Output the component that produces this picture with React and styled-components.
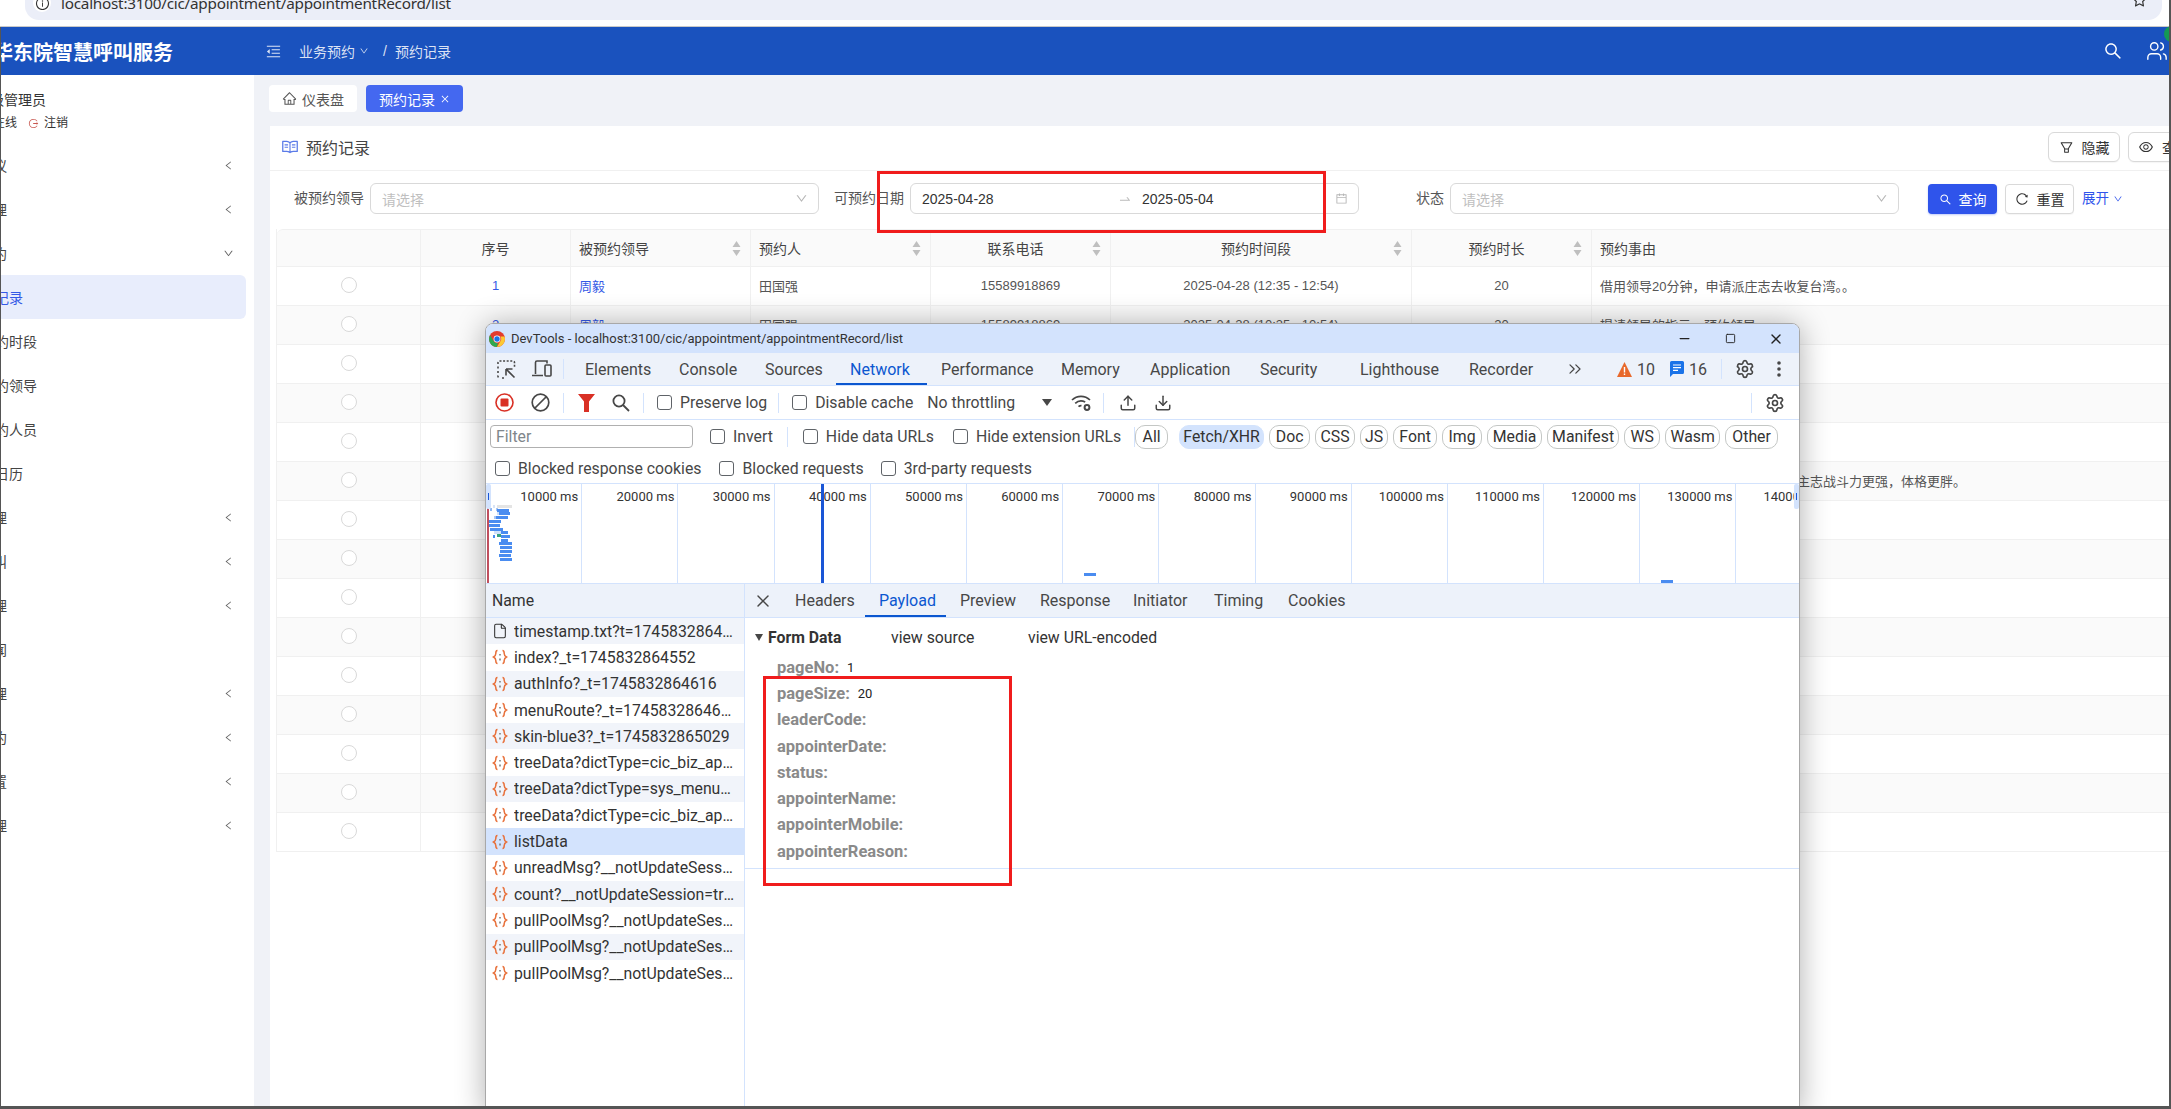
import React from 'react';
import styled, { createGlobalStyle } from 'styled-components';
import {
  AiOutlineMenuFold,
  AiOutlineHome,
  AiOutlineFilter,
  AiOutlineEye,
  AiOutlineSearch,
  AiOutlineReload,
  AiOutlineDown,
  AiOutlineLeft,
  AiOutlineCalendar,
  AiOutlineClose,
  AiOutlineSwapRight,
  AiOutlineStar,
  AiOutlineRead,
  AiOutlineInfoCircle,
  AiOutlineLogout,
} from 'react-icons/ai';
import { Users, ChevronsRight, File, Settings, Minus, Square, X, Upload, Download } from 'lucide-react';

const GlobalStyle = createGlobalStyle`
  html, body { margin: 0; padding: 0; background: #fff; }
  * { box-sizing: border-box; }
`;

const Page = styled.div`
  position: relative;
  width: 2171px;
  height: 1109px;
  overflow: hidden;
  background: #fff;
  font-family: 'Liberation Sans', 'Noto Sans CJK SC', sans-serif;
  font-size: 14px;
  color: #444;
`;

/* browser chrome, only its lower edge is in the shot */
const BrowserBar = styled.div`
  height: 27px;
  padding-left: 25px;
  padding-right: 9px;
  background: #fff;
  border-bottom: 1px solid #c9c9c9;
`;

const UrlPill = styled.div`
  height: 20px;
  padding: 0 14px 0 8px;
  display: flex;
  align-items: flex-start;
  gap: 10px;
  overflow: hidden;
  background: #ebeef8;
  border-radius: 0 0 14px 14px;
  color: #333;
`;

const UrlInfo = styled.span`
  display: flex;
  width: 18px;
  height: 18px;
  margin-top: -6px;
  align-items: center;
  justify-content: center;
  background: #fff;
  border-radius: 50%;
  font-size: 15px;
`;

const UrlText = styled.span`
  margin-top: -6px;
  font-size: 15.3px;
  line-height: 18px;
  font-family: 'Noto Sans', sans-serif;
  letter-spacing: -0.25px;
`;

const UrlStar = styled.span`
  margin-left: auto;
  margin-top: -8px;
  font-size: 17px;
  display: flex;
`;

const AppHeader = styled.header`
  height: 48px;
  display: flex;
  align-items: center;
  background: #1a52be;
  color: #fff;
`;

const Brand = styled.div`
  width: 272px;
  margin-left: -7px;
  font-size: 20px;
  font-weight: 700;
  white-space: nowrap;
`;

const Crumbs = styled.div`
  display: flex;
  align-items: center;
  color: rgba(255, 255, 255, 0.85);
  font-size: 14px;
  gap: 4px;
`;

const CrumbIcon = styled.span`
  display: flex;
  font-size: 17px;
  margin-right: 13px;
`;

const CrumbSep = styled.span`
  margin: 0 4px 0 10px;
`;

const HeaderTools = styled.div`
  position: relative;
  margin-left: auto;
  padding-right: 3px;
  display: flex;
  align-items: center;
  gap: 23px;
  font-size: 20px;
`;

const HeaderBadge = styled.span`
  position: absolute;
  top: -14px;
  right: -9px;
  width: 16px;
  height: 16px;
  border-radius: 50%;
  background: #149a55;
`;

const Body = styled.div`
  display: flex;
  height: 1034px;
`;

const Sidebar = styled.aside`
  flex: none;
  width: 254px;
  background: #fff;
  overflow: hidden;
`;

const UserPanel = styled.div`
  height: 68px;
  padding: 16px 0 0;
  color: #333;
`;

const UserName = styled.div`
  margin-left: -10px;
  height: 18px;
  line-height: 18px;
  font-size: 14px;
`;

const UserStatus = styled.div`
  display: flex;
  align-items: center;
  margin: 6px 0 0 -7px;
  font-size: 12px;
  line-height: 16px;
`;

const LogoutMark = styled.span`
  display: flex;
  margin: 0 5px 0 11px;
  font-size: 11px;
  color: #c8574f;
`;

const MenuItem = styled.div`
  height: 44px;
  width: 246px;
  padding-right: 12px;
  display: flex;
  align-items: center;
  border-radius: 0 6px 6px 0;
  color: ${(p) => (p.$active ? '#3459e6' : '#444')};
  background: ${(p) => (p.$active ? '#e8edfc' : 'transparent')};
`;

const MenuLabel = styled.span`
  margin-left: ${(p) => (p.$sub ? '-5px' : '-7px')};
  white-space: nowrap;
`;

const MenuArrow = styled.span`
  margin-left: auto;
  display: flex;
  font-size: 11px;
  color: #666;
`;

const Main = styled.main`
  flex: none;
  width: 1970px;
  background: #f0f2f7;
`;

const TabStrip = styled.div`
  height: 51px;
  padding: 10px 0 0 15px;
  display: flex;
  gap: 9px;
`;

const PageTab = styled.div`
  width: ${(p) => p.$w}px;
  height: 27px;
  display: flex;
  align-items: center;
  justify-content: center;
  gap: 5px;
  border-radius: 4px;
  font-size: 14px;
  background: ${(p) => (p.$active ? '#4468f0' : '#fff')};
  color: ${(p) => (p.$active ? '#fff' : '#555')};
`;

const Card = styled.section`
  margin-left: 16px;
  height: 983px;
  background: #fff;
`;

const CardHead = styled.div`
  height: 45px;
  padding: 0 24px 2px 11px;
  display: flex;
  align-items: center;
  border-bottom: 1px solid #f0f0f0;
`;

const CardTitle = styled.h2`
  margin: 0 0 0 7px;
  font-size: 16px;
  font-weight: 400;
  color: #444;
`;

const CardIcon = styled.span`
  display: flex;
  font-size: 18px;
  color: #5b7be8;
`;

const GhostButton = styled.button`
  flex: none;
  width: ${(p) => p.$w}px;
  height: 30px;
  margin-left: ${(p) => p.$ml || 0};
  display: flex;
  align-items: center;
  justify-content: center;
  gap: 8px;
  background: #fff;
  border: 1px solid #d9d9d9;
  border-radius: 6px;
  box-shadow: 0 1px 1px rgba(0, 0, 0, 0.04);
  font: inherit;
  color: #333;
`;

const SearchRow = styled.div`
  height: 58px;
  padding-top: 12px;
  display: flex;
  align-items: flex-start;
`;

const FieldLabel = styled.label`
  flex: none;
  width: ${(p) => p.$w}px;
  line-height: 31px;
  margin-right: 6px;
  text-align: right;
  color: #555;
`;

const Picker = styled.div`
  flex: none;
  width: 449px;
  height: 31px;
  padding: 0 10px 0 11px;
  display: flex;
  align-items: center;
  border: 1px solid #d9d9d9;
  border-radius: 6px;
  background: #fff;
`;

const Placeholder = styled.span`
  color: #bfbfbf;
`;

const PickerIcon = styled.span`
  display: flex;
  margin-left: auto;
  font-size: 13px;
  color: #b5b5b5;
`;

const DateValue = styled.span`
  width: ${(p) => p.$w}px;
  color: #333;
`;

const DateArrow = styled.span`
  display: flex;
  width: 130px;
  padding-left: 106px;
  font-size: 14px;
  color: #bbb;
`;

const PrimaryButton = styled.button`
  flex: none;
  width: 69px;
  height: 30px;
  margin: 1px 0 0 29px;
  display: flex;
  align-items: center;
  justify-content: center;
  gap: 7px;
  background: #2f54eb;
  border: 0;
  border-radius: 4px;
  color: #fff;
  font: inherit;
  box-shadow: 0 1px 2px rgba(47, 84, 235, 0.3);
`;

const ResetButton = styled(GhostButton)`
  margin: 1px 0 0 8px;
  border-radius: 4px;
`;

const ExpandLink = styled.span`
  margin: 0 0 0 8px;
  display: flex;
  align-items: center;
  gap: 4px;
  line-height: 31px;
  color: #2f54eb;
  font-size: 13.5px;
`;

const Table = styled.div`
  margin: 0 6px;
  border-left: 1px solid #f0f0f0;
`;

const COLUMNS = '144px 150px 180px 180px 180px 301px 180px 1fr';

const HeadRow = styled.div`
  display: grid;
  grid-template-columns: ${COLUMNS};
  height: 38px;
  background: #fafafa;
  border-top: 1px solid #f0f0f0;
  border-bottom: 1px solid #f0f0f0;
  border-radius: 6px 0 0 0;
`;

const BodyRow = styled.div`
  display: grid;
  grid-template-columns: ${COLUMNS};
  height: 39px;
  background: ${(p) => (p.$striped ? '#fafafa' : '#fff')};
  border-bottom: 1px solid #f0f0f0;
`;

const HeadCell = styled.div`
  position: relative;
  display: flex;
  align-items: center;
  justify-content: ${(p) => (p.$center ? 'center' : 'flex-start')};
  padding: 0 ${(p) => (p.$sort && p.$center ? '18px' : '8px')} 0 8px;
  border-right: 1px solid #f0f0f0;
  color: #444;
  font-weight: 400;
`;

const SortCaret = styled.svg`
  position: absolute;
  right: 9px;
  top: 10px;
`;

const Cell = styled.div`
  display: flex;
  align-items: center;
  justify-content: ${(p) => (p.$center ? 'center' : 'flex-start')};
  padding: 0 8px 2px ${(p) => p.$indent || 8}px;
  border-right: 1px solid #f0f0f0;
  font-size: 13px;
  color: #555;
  white-space: nowrap;
`;

const LinkCell = styled(Cell)`
  color: #3459e6;
`;

const Radio = styled.span`
  width: 16px;
  height: 16px;
  border: 1px solid #d9d9d9;
  border-radius: 50%;
  background: #fff;
`;

/* devtools floating over the page */
const DevWindow = styled.div`
  position: absolute;
  left: 485px;
  top: 323px;
  width: 1315px;
  height: 790px;
  background: #fff;
  border: 1px solid #a8a8a8;
  border-radius: 8px 8px 0 0;
  box-shadow: 0 2px 30px rgba(0, 0, 0, 0.32);
  font-family: Roboto, 'Liberation Sans', sans-serif;
  font-size: 15.8px;
  color: #474747;
  overflow: hidden;
`;

const TitleBar = styled.div`
  height: 29px;
  padding-left: 3px;
  display: flex;
  align-items: center;
  gap: 6px;
  background: #d3e3fd;
  color: #333;
  font-size: 13px;
`;

const WinButtons = styled.div`
  margin-left: auto;
  display: flex;
  color: #222;
`;

const WinButton = styled.span`
  width: 46px;
  height: 29px;
  display: flex;
  align-items: center;
  justify-content: center;
`;

const DevBar = styled.div`
  height: ${(p) => p.$h || 34}px;
  display: flex;
  align-items: center;
  background: ${(p) => (p.$tint ? '#edf2fa' : '#fff')};
  border-bottom: ${(p) => (p.$line === false ? '0' : '1px solid #d3e3fd')};
`;

const ToolSlot = styled.span`
  flex: none;
  width: ${(p) => p.$w}px;
  margin-left: ${(p) => p.$ml || 0}px;
  display: flex;
  align-items: center;
  justify-content: center;
  color: #474747;
`;

const BarSep = styled.span`
  flex: none;
  width: 1px;
  height: 20px;
  margin-left: ${(p) => p.$ml || 0}px;
  margin-right: ${(p) => p.$mr || 0}px;
  background: #d3e3fd;
`;

const DevTab = styled.div`
  flex: none;
  width: ${(p) => p.$w}px;
  height: 100%;
  padding-left: 14px;
  display: flex;
  align-items: center;
  font-size: 16px;
  color: ${(p) => (p.$active ? '#0b57d0' : '#474747')};
  border-bottom: 2px solid ${(p) => (p.$active ? '#0b57d0' : 'transparent')};
  border-top: 2px solid transparent;
`;

const Counter = styled.span`
  display: flex;
  align-items: center;
  gap: 5px;
  margin-left: ${(p) => p.$ml || 0}px;
  font-size: 16px;
`;

const CheckItem = styled.label`
  flex: none;
  display: flex;
  align-items: center;
  gap: 8px;
  margin-left: ${(p) => p.$ml || 0}px;
  white-space: nowrap;
`;

const CheckBox = styled.span`
  width: 15px;
  height: 15px;
  border: 1.5px solid #5f6368;
  border-radius: 3px;
  background: #fff;
`;

const FilterInput = styled.div`
  width: 203px;
  height: 23px;
  margin-left: 4px;
  padding-left: 5px;
  line-height: 21px;
  border: 1px solid #b0b0b0;
  border-radius: 4px;
  color: #80868b;
`;

const TypePill = styled.span`
  flex: none;
  width: ${(p) => p.$w}px;
  height: 24px;
  margin-left: ${(p) => p.$ml ?? 5}px;
  display: flex;
  align-items: center;
  justify-content: center;
  border-radius: 10px;
  border: 1px solid ${(p) => (p.$on ? '#d3e3fd' : '#c4c7c5')};
  background: ${(p) => (p.$on ? '#d3e3fd' : '#fff')};
  color: #333;
`;

const Timeline = styled.div`
  position: relative;
  height: 101px;
  display: grid;
  grid-auto-flow: column;
  grid-auto-columns: 96.2px;
  overflow: hidden;
  border-top: 1px solid #d3e3fd;
  border-bottom: 1px solid #d3e3fd;
`;

const TimeCell = styled.div`
  padding: 5px 3px 0 0;
  text-align: right;
  white-space: nowrap;
  font-size: 13px;
  line-height: 16px;
  color: #333;
  border-right: 1px solid #d3e3fd;
`;

const Playhead = styled.span`
  position: absolute;
  left: 335px;
  top: 0;
  bottom: 0;
  width: 3px;
  background: #1a56d6;
`;

const Handle = styled.span`
  position: absolute;
  top: 0;
  width: 5px;
  height: 25px;
  background: #d3e3fd;
  border-radius: 2px;
  ${(p) => (p.$right ? 'right: 0;' : 'left: 0;')}
  &::after {
    content: '';
    position: absolute;
    top: 9px;
    left: 2px;
    width: 1px;
    height: 7px;
    background: #1a56d6;
  }
`;

const Waterfall = styled.svg`
  position: absolute;
  left: 0;
  top: 15px;
`;

const Split = styled.div`
  display: flex;
  height: 540px;
`;

const NamePane = styled.div`
  flex: none;
  width: 259px;
  border-right: 1px solid #d3e3fd;
`;

const NameHead = styled.div`
  height: 34px;
  padding-left: 6px;
  display: flex;
  align-items: center;
  background: #edf2fa;
  border-bottom: 1px solid #d3e3fd;
  color: #333;
`;

const RequestRow = styled.div`
  height: 26.3px;
  padding-left: 6px;
  display: flex;
  align-items: center;
  gap: 6px;
  white-space: nowrap;
  color: #333;
  background: ${(p) => (p.$selected ? '#d3e3fd' : p.$striped ? '#f1f4fa' : '#fff')};
  & > svg {
    flex: none;
  }
`;

const RequestName = styled.span`
  width: 221px;
  overflow: hidden;
  text-overflow: ellipsis;
`;

const DetailPane = styled.div`
  flex: 1;
`;

const FormSection = styled.div`
  height: 251px;
  padding: 6px 0 0 10px;
  border-bottom: 1px solid #d3e3fd;
`;

const FormHead = styled.div`
  height: 26px;
  display: flex;
  align-items: center;
`;

const Triangle = styled.span`
  width: 0;
  height: 0;
  margin-right: 5px;
  border-left: 4px solid transparent;
  border-right: 4px solid transparent;
  border-top: 7px solid #474747;
`;

const FormTitle = styled.strong`
  width: 123px;
  color: #333;
  font-weight: 700;
`;

const FormLink = styled.span`
  width: ${(p) => p.$w}px;
  color: #333;
`;

const FormRows = styled.div`
  margin: 4px 0 0 22px;
`;

const FormRow = styled.div`
  height: 26.3px;
  display: flex;
  align-items: center;
  gap: 8px;
`;

const FormKey = styled.span`
  font-size: 16.5px;
  font-weight: 700;
  color: #8a8a8a;
`;

const FormValue = styled.span`
  font-size: 13px;
  color: #222;
`;

const RedBox = styled.div`
  position: absolute;
  border: 3px solid #f01c1c;
  pointer-events: none;
`;

const DateHighlight = styled(RedBox)`
  left: 877px;
  top: 171px;
  width: 449px;
  height: 62px;
`;

const PayloadHighlight = styled(RedBox)`
  left: 763px;
  top: 676px;
  width: 249px;
  height: 210px;
`;

const ScreenEdge = styled.span`
  position: absolute;
  background: #555;
  ${(p) => p.$side === 'left' && 'left: 0; top: 27px; bottom: 0; width: 1px;'}
  ${(p) => p.$side === 'right' && 'right: 0; top: 0; bottom: 0; width: 2px;'}
  ${(p) => p.$side === 'bottom' && 'left: 0; right: 0; bottom: 0; height: 3px;'}
`;

const ChromeLogo = () => (
  <svg width="16" height="16" viewBox="0 0 16 16">
    <circle cx="8" cy="8" r="8" fill="#e33b2e" />
    <path d="M8 16a8 8 0 0 1-6.9-12L4.6 10a4 4 0 0 0 4.2 1.9z" fill="#2da94f" />
    <path d="M16 8a8 8 0 0 1-8 8l3.5-6a4 4 0 0 0-.1-4.6h4a8 8 0 0 1 .6 2.6z" fill="#fcc934" />
    <circle cx="8" cy="8" r="3.4" fill="#fff" />
    <circle cx="8" cy="8" r="2.7" fill="#1a73e8" />
  </svg>
);

const InspectIcon = () => (
  <svg width="19" height="19" viewBox="0 0 19 19" fill="none" stroke="#474747" strokeWidth="1.6">
    <path d="M1 4V2.5A1.5 1.5 0 0 1 2.5 1H16a1.5 1.5 0 0 1 1.5 1.5V7M1 6.5v2M1 11v2M1 15.5A2 2 0 0 0 3 18M5 18h2" strokeDasharray="2 1.6" />
    <path d="M9 9h6.5M9 9v6.5M9 9l8.5 8.5" />
  </svg>
);

const DeviceIcon = () => (
  <svg width="20" height="18" viewBox="0 0 20 18" fill="none" stroke="#474747" strokeWidth="1.6">
    <path d="M3.5 14V2.5A1.5 1.5 0 0 1 5 1h10v2.5" />
    <path d="M0 15.5h11" />
    <rect x="13" y="5" width="6" height="11" rx="1" />
  </svg>
);

const RecordIcon = () => (
  <svg width="19" height="19" viewBox="0 0 19 19">
    <circle cx="9.5" cy="9.5" r="8.5" fill="none" stroke="#d93025" strokeWidth="1.6" />
    <rect x="5.5" y="5.5" width="8" height="8" rx="1" fill="#d93025" />
  </svg>
);

const ClearIcon = () => (
  <svg width="19" height="19" viewBox="0 0 19 19" fill="none" stroke="#474747" strokeWidth="1.7">
    <circle cx="9.5" cy="9.5" r="8.3" />
    <path d="M15.5 3.5l-12 12" />
  </svg>
);

const FunnelIcon = () => (
  <svg width="17" height="18" viewBox="0 0 17 18">
    <path d="M0 0h17l-6 7.5V18H6V7.5z" fill="#d93025" />
  </svg>
);

const LensIcon = () => (
  <svg width="18" height="18" viewBox="0 0 18 18" fill="none" stroke="#474747" strokeWidth="1.8">
    <circle cx="7" cy="7" r="5.6" />
    <path d="M11 11l6 6" />
  </svg>
);

const WifiGearIcon = () => (
  <svg width="21" height="18" viewBox="0 0 21 18" fill="none" stroke="#474747" strokeWidth="1.7">
    <path d="M1 6a13 13 0 0 1 18 0M4.2 9.4a8.5 8.5 0 0 1 10-1.4M7.5 12.6a4 4 0 0 1 3-1" />
    <circle cx="16" cy="13.5" r="2.4" strokeWidth="2" />
  </svg>
);

const WarnIcon = () => (
  <svg width="15" height="15" viewBox="0 0 15 15">
    <path d="M7.5 0L15 15H0z" fill="#e8692c" />
    <path d="M6.8 5h1.4v5.5H6.8zM6.8 11.5h1.4V13H6.8z" fill="#fff" />
  </svg>
);

const MessageIcon = () => (
  <svg width="14" height="16" viewBox="0 0 14 16">
    <path d="M1.5 0h11A1.5 1.5 0 0 1 14 1.5v10a1.5 1.5 0 0 1-1.5 1.5H3l-3 3V1.5A1.5 1.5 0 0 1 1.5 0z" fill="#1a73e8" />
    <path d="M3 4h8M3 6.7h8M3 9.4h5" stroke="#fff" strokeWidth="1.2" />
  </svg>
);

const DotsIcon = () => (
  <svg width="4" height="16" viewBox="0 0 4 16" fill="#474747">
    <circle cx="2" cy="2" r="1.8" />
    <circle cx="2" cy="8" r="1.8" />
    <circle cx="2" cy="14" r="1.8" />
  </svg>
);

const FetchIcon = () => (
  <svg width="16" height="16" viewBox="0 0 16 16" fill="none" stroke="#e8703a" strokeWidth="1.5">
    <path d="M5.5 1.5C3.8 1.5 3.8 3 3.8 4.5S3.6 7 1.5 8c2.1 1 2.3 2 2.3 3.5s0 3 1.7 3" />
    <path d="M10.5 1.5c1.7 0 1.7 1.5 1.7 3s.2 2.5 2.3 3.5c-2.1 1-2.3 2-2.3 3.5s0 3-1.7 3" />
    <path d="M8 5v1.4M8 9.5v2" stroke="#777" />
  </svg>
);

const SortIcon = () => (
  <SortCaret width="9" height="17" viewBox="0 0 9 17" fill="#bfbfbf">
    <path d="M4.5 1L8.5 7H.5zM4.5 16L.5 10h8z" />
  </SortCaret>
);

const WATERFALL = [
  [7, 6, 2, '#d8e4f7'],
  [11, 6, 15, '#e4e4e4'],
  [4, 9, 2, '#8fb6f2'],
  [10, 9, 2, '#a7c6f5'],
  [11, 10, 12, '#4a8cf0'],
  [11, 13, 2, '#cfe0fa'],
  [13, 13, 11, '#4a8cf0'],
  [10, 17, 12, '#4a8cf0'],
  [8, 17, 2, '#a7c6f5'],
  [3, 21, 12, '#4a8cf0'],
  [3, 25, 11, '#4a8cf0'],
  [4, 29, 13, '#4a8cf0'],
  [8, 32, 9, '#cfe0fa'],
  [15, 32, 7, '#4a8cf0'],
  [11, 35, 4, '#39a37f'],
  [15, 36, 9, '#4a8cf0'],
  [7, 36, 2, '#4a8cf0'],
  [15, 40, 7, '#4a8cf0'],
  [13, 43, 13, '#4a8cf0'],
  [14, 47, 12, '#4a8cf0'],
  [14, 51, 12, '#4a8cf0'],
  [13, 55, 12, '#4a8cf0'],
  [14, 59, 12, '#4a8cf0'],
  [598, 74, 12, '#4a8cf0'],
  [1175, 81, 12, '#4a8cf0'],
];

const DEV_TABS = [
  ['Elements', 94],
  ['Console', 86],
  ['Sources', 85],
  ['Network', 91, true],
  ['Performance', 120],
  ['Memory', 89],
  ['Application', 110],
  ['Security', 100],
  ['Lighthouse', 109],
  ['Recorder', 98],
];

const DETAIL_TABS = [
  ['Headers', 84],
  ['Payload', 81, true],
  ['Preview', 80],
  ['Response', 93],
  ['Initiator', 81],
  ['Timing', 74],
  ['Cookies', 70],
];

const TYPE_PILLS = [
  ['All', 33, 0],
  ['Fetch/XHR', 85, 11, true],
  ['Doc', 41],
  ['CSS', 40],
  ['JS', 28],
  ['Font', 44],
  ['Img', 40],
  ['Media', 55],
  ['Manifest', 72],
  ['WS', 36],
  ['Wasm', 55],
  ['Other', 53],
];

const REQUESTS = [
  'timestamp.txt?t=1745832864576',
  'index?_t=1745832864552',
  'authInfo?_t=1745832864616',
  'menuRoute?_t=1745832864688',
  'skin-blue3?_t=1745832865029',
  'treeData?dictType=cic_biz_appointer',
  'treeData?dictType=sys_menu_type_list',
  'treeData?dictType=cic_biz_appoint',
  'listData',
  'unreadMsg?__notUpdateSession=true',
  'count?__notUpdateSession=true&t=1',
  'pullPoolMsg?__notUpdateSession=true',
  'pullPoolMsg?__notUpdateSession=true',
  'pullPoolMsg?__notUpdateSession=true',
];

const FORM_DATA = [
  ['pageNo', '1'],
  ['pageSize', '20'],
  ['leaderCode', ''],
  ['appointerDate', ''],
  ['status', ''],
  ['appointerName', ''],
  ['appointerMobile', ''],
  ['appointerReason', ''],
];

const MENU = [
  { label: '议', arrow: 'left' },
  { label: '理', arrow: 'left' },
  { label: '约', arrow: 'down' },
  { label: '记录', sub: true, active: true },
  { label: '约时段', sub: true },
  { label: '约领导', sub: true },
  { label: '约人员', sub: true },
  { label: '日历', sub: true },
  { label: '理', arrow: 'left' },
  { label: '叫', arrow: 'left' },
  { label: '理', arrow: 'left' },
  { label: '闻' },
  { label: '理', arrow: 'left' },
  { label: '约', arrow: 'left' },
  { label: '置', arrow: 'left' },
  { label: '理', arrow: 'left' },
];

const HEADERS = [
  { label: '', center: true },
  { label: '序号', center: true },
  { label: '被预约领导', sort: true },
  { label: '预约人', sort: true },
  { label: '联系电话', center: true, sort: true },
  { label: '预约时间段', center: true, sort: true },
  { label: '预约时长', center: true, sort: true },
  { label: '预约事由' },
];

const ROWS = [
  { no: 1, leader: '周毅', name: '田国强', phone: '15589918869', time: '2025-04-28 (12:35 - 12:54)', mins: 20, reason: '借用领导20分钟，申请派庄志去收复台湾。。' },
  { no: 2, leader: '周毅', name: '田国强', phone: '15589918869', time: '2025-04-28 (10:35 - 10:54)', mins: 20, reason: '提请领导的指示，预约领导' },
  {},
  {},
  {},
  { reason: '主志战斗力更强，体格更胖。', indent: 205 },
  {},
  {},
  {},
  {},
  {},
  {},
  {},
  {},
  {},
];

const App = () => (
  <Page>
    <GlobalStyle />
    <BrowserBar>
      <UrlPill>
        <UrlInfo><AiOutlineInfoCircle /></UrlInfo>
        <UrlText>localhost:3100/cic/appointment/appointmentRecord/list</UrlText>
        <UrlStar><AiOutlineStar /></UrlStar>
      </UrlPill>
    </BrowserBar>

    <AppHeader>
      <Brand>华东院智慧呼叫服务</Brand>
      <Crumbs>
        <CrumbIcon><AiOutlineMenuFold /></CrumbIcon>
        <span>业务预约</span>
        <AiOutlineDown size={10} />
        <CrumbSep>/</CrumbSep>
        <span>预约记录</span>
      </Crumbs>
      <HeaderTools>
        <AiOutlineSearch />
        <Users size={22} strokeWidth={1.5} />
        <HeaderBadge />
      </HeaderTools>
    </AppHeader>

    <Body>
      <Sidebar>
        <UserPanel>
          <UserName>级管理员</UserName>
          <UserStatus>
            在线
            <LogoutMark><AiOutlineLogout /></LogoutMark>
            注销
          </UserStatus>
        </UserPanel>
        {MENU.map((item, i) => (
          <MenuItem key={i} $active={item.active}>
            <MenuLabel $sub={item.sub}>{item.label}</MenuLabel>
            {item.arrow && (
              <MenuArrow>{item.arrow === 'left' ? <AiOutlineLeft /> : <AiOutlineDown />}</MenuArrow>
            )}
          </MenuItem>
        ))}
      </Sidebar>

      <Main>
        <TabStrip>
          <PageTab $w={88}><AiOutlineHome size={15} />仪表盘</PageTab>
          <PageTab $w={97} $active>预约记录<AiOutlineClose size={10} /></PageTab>
        </TabStrip>

        <Card>
          <CardHead>
            <CardIcon><AiOutlineRead /></CardIcon>
            <CardTitle>预约记录</CardTitle>
            <GhostButton $w={72} $ml="auto"><AiOutlineFilter size={15} />隐藏</GhostButton>
            <GhostButton $w={72} $ml="8px"><AiOutlineEye size={16} />查看</GhostButton>
          </CardHead>

          <SearchRow>
            <FieldLabel $w={94}>被预约领导</FieldLabel>
            <Picker>
              <Placeholder>请选择</Placeholder>
              <PickerIcon><AiOutlineDown /></PickerIcon>
            </Picker>
            <FieldLabel $w={85}>可预约日期</FieldLabel>
            <Picker>
              <DateValue $w={90}>2025-04-28</DateValue>
              <DateArrow><AiOutlineSwapRight /></DateArrow>
              <DateValue $w={90}>2025-05-04</DateValue>
              <PickerIcon><AiOutlineCalendar /></PickerIcon>
            </Picker>
            <FieldLabel $w={85}>状态</FieldLabel>
            <Picker>
              <Placeholder>请选择</Placeholder>
              <PickerIcon><AiOutlineDown /></PickerIcon>
            </Picker>
            <PrimaryButton><AiOutlineSearch size={13} />查询</PrimaryButton>
            <ResetButton $w={69}><AiOutlineReload size={14} />重置</ResetButton>
            <ExpandLink>展开<AiOutlineDown size={10} /></ExpandLink>
          </SearchRow>

          <Table>
            <HeadRow>
              {HEADERS.map((h, i) => (
                <HeadCell key={i} $center={h.center} $sort={h.sort}>
                  {h.label}
                  {h.sort && <SortIcon />}
                </HeadCell>
              ))}
            </HeadRow>
            {ROWS.map((row, i) => (
              <BodyRow key={i} $striped={i % 2 === 1}>
                <Cell $center><Radio /></Cell>
                <LinkCell $center>{row.no}</LinkCell>
                <LinkCell>{row.leader}</LinkCell>
                <Cell>{row.name}</Cell>
                <Cell $center>{row.phone}</Cell>
                <Cell $center>{row.time}</Cell>
                <Cell $center>{row.mins}</Cell>
                <Cell $indent={row.indent}>{row.reason}</Cell>
              </BodyRow>
            ))}
          </Table>
        </Card>
      </Main>
    </Body>

    <DevWindow>
      <TitleBar>
        <ChromeLogo />
        DevTools - localhost:3100/cic/appointment/appointmentRecord/list
        <WinButtons>
          <WinButton><Minus size={15} /></WinButton>
          <WinButton><Square size={11} /></WinButton>
          <WinButton><X size={16} /></WinButton>
        </WinButtons>
      </TitleBar>

      <DevBar $tint $h={33}>
        <ToolSlot $w={40}><InspectIcon /></ToolSlot>
        <ToolSlot $w={31}><DeviceIcon /></ToolSlot>
        <BarSep $ml={6} $mr={7} />
        {DEV_TABS.map(([label, w, active]) => (
          <DevTab key={label} $w={w} $active={active}>{label}</DevTab>
        ))}
        <ToolSlot $w={29} $ml={7}><ChevronsRight size={20} strokeWidth={1.5} /></ToolSlot>
        <Counter $ml={28}><WarnIcon />10</Counter>
        <Counter $ml={15}><MessageIcon />16</Counter>
        <BarSep $ml={14} />
        <ToolSlot $w={28} $ml={9}><Settings size={20} /></ToolSlot>
        <ToolSlot $w={16} $ml={12}><DotsIcon /></ToolSlot>
      </DevBar>

      <DevBar>
        <ToolSlot $w={37}><RecordIcon /></ToolSlot>
        <ToolSlot $w={34}><ClearIcon /></ToolSlot>
        <BarSep $ml={6} />
        <ToolSlot $w={34} $ml={5}><FunnelIcon /></ToolSlot>
        <ToolSlot $w={34} $ml={1}><LensIcon /></ToolSlot>
        <BarSep $ml={5} />
        <CheckItem $ml={13}><CheckBox />Preserve log</CheckItem>
        <BarSep $ml={11} />
        <CheckItem $ml={13}><CheckBox />Disable cache</CheckItem>
        <CheckItem $ml={14}>No throttling</CheckItem>
        <ToolSlot $w={12} $ml={26}>
          <svg width="10" height="7" viewBox="0 0 10 7"><path d="M0 0h10L5 7z" fill="#474747" /></svg>
        </ToolSlot>
        <ToolSlot $w={22} $ml={17}><WifiGearIcon /></ToolSlot>
        <BarSep $ml={11} />
        <ToolSlot $w={18} $ml={15}><Upload size={18} /></ToolSlot>
        <ToolSlot $w={18} $ml={17}><Download size={18} /></ToolSlot>
        <BarSep $ml={579} />
        <ToolSlot $w={20} $ml={13}><Settings size={20} /></ToolSlot>
      </DevBar>

      <DevBar $h={33} $line={false}>
        <FilterInput>Filter</FilterInput>
        <CheckItem $ml={17}><CheckBox />Invert</CheckItem>
        <BarSep $ml={14} />
        <CheckItem $ml={15}><CheckBox />Hide data URLs</CheckItem>
        <CheckItem $ml={19}><CheckBox />Hide extension URLs</CheckItem>
        <BarSep $ml={13} />
        {TYPE_PILLS.map(([label, w, ml, on], i) => (
          <TypePill key={label} $w={w} $ml={i === 0 ? 0 : ml} $on={on}>{label}</TypePill>
        ))}
      </DevBar>

      <DevBar $h={30} $line={false}>
        <CheckItem $ml={9}><CheckBox />Blocked response cookies</CheckItem>
        <CheckItem $ml={18}><CheckBox />Blocked requests</CheckItem>
        <CheckItem $ml={17}><CheckBox />3rd-party requests</CheckItem>
      </DevBar>

      <Timeline>
        {Array.from({ length: 14 }, (_, i) => (
          <TimeCell key={i}>{(i + 1) * 10000} ms</TimeCell>
        ))}
        <Waterfall width="1313" height="85" viewBox="0 0 1313 85">
          <rect x="1" y="9" width="2" height="76" fill="#c0505f" />
          {WATERFALL.map(([x, y, w, fill], i) => (
            <rect key={i} x={x} y={y} width={w} height="3" fill={fill} />
          ))}
        </Waterfall>
        <Playhead />
        <Handle />
        <Handle $right />
      </Timeline>

      <Split>
        <NamePane>
          <NameHead>Name</NameHead>
          {REQUESTS.map((name, i) => (
            <RequestRow key={i} $striped={i % 2 === 0} $selected={name === 'listData'}>
              {i === 0 ? <File size={16} strokeWidth={1.6} /> : <FetchIcon />}
              <RequestName>{name}</RequestName>
            </RequestRow>
          ))}
        </NamePane>
        <DetailPane>
          <DevBar $tint>
            <ToolSlot $w={36}><X size={20} strokeWidth={1.7} /></ToolSlot>
            {DETAIL_TABS.map(([label, w, active]) => (
              <DevTab key={label} $w={w} $active={active}>{label}</DevTab>
            ))}
          </DevBar>
          <FormSection>
            <FormHead>
              <Triangle />
              <FormTitle>Form Data</FormTitle>
              <FormLink $w={137}>view source</FormLink>
              <FormLink $w={160}>view URL-encoded</FormLink>
            </FormHead>
            <FormRows>
              {FORM_DATA.map(([key, value]) => (
                <FormRow key={key}>
                  <FormKey>{key}:</FormKey>
                  <FormValue>{value}</FormValue>
                </FormRow>
              ))}
            </FormRows>
          </FormSection>
        </DetailPane>
      </Split>
    </DevWindow>

    <DateHighlight />
    <PayloadHighlight />
    <ScreenEdge $side="left" />
    <ScreenEdge $side="right" />
    <ScreenEdge $side="bottom" />
  </Page>
);

export default App;
